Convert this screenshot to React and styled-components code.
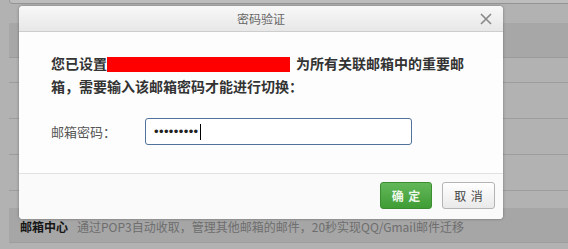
import React from "react";
import styled, { createGlobalStyle } from "styled-components";

const Global = createGlobalStyle`
  html, body { margin: 0; padding: 0; }
  body {
    background: #f1f1f1;
    font-family: "Noto Sans CJK SC", "Noto Sans", sans-serif;
    width: 568px;
    height: 249px;
    overflow: hidden;
  }
`;

const Page = styled.div`
  position: relative;
  width: 568px;
  height: 249px;
  padding-left: 9px;
  box-sizing: border-box;
  display: flex;
  flex-direction: column;
`;

const TopBox = styled.div`
  height: 3px;
  background: #ffffff;
  border-bottom: 1px solid #c8c8c8;
  border-left: 1px solid #d0d0d0;
  border-bottom-left-radius: 4px;
`;

const Spacer = styled.div`
  height: ${(p) => p.$h}px;
`;

const HeaderRow = styled.div`
  height: 34px;
  background: #e2e2e2;
  border-bottom: 1px solid #d2d2d2;
`;

const Row = styled.div`
  height: ${(p) => p.$h}px;
  border-bottom: 1px solid #d4d4d4;
`;

const Section = styled.div`
  height: 35px;
  background: #e0e0e0;
  border-bottom: 1px solid #d6d6d6;
  display: flex;
  align-items: center;
  padding: 3px 0 0 11px;
  box-sizing: border-box;
  gap: 9px;
  font-size: 12px;
  white-space: nowrap;
`;

const SectionTitle = styled.span`
  font-weight: bold;
  color: #1e1e1e;
`;

const SectionDesc = styled.span`
  color: #959595;
`;

const Overlay = styled.div`
  position: absolute;
  inset: 0;
  background: rgba(0, 0, 0, 0.26);
`;

const Dialog = styled.div`
  position: absolute;
  left: 19px;
  top: 6px;
  width: 484px;
  background: #fdfdfd;
  border-radius: 4px;
  box-shadow: 0 0 3px rgba(0, 0, 0, 0.35);
  overflow: hidden;
  display: flex;
  flex-direction: column;
`;

const TitleBar = styled.div`
  position: relative;
  height: 25px;
  border-bottom: 1px solid #cdcdcd;
  background: linear-gradient(#f8f8f8, #e7e7e7);
  display: flex;
  align-items: center;
  justify-content: center;
  font-size: 12px;
  color: #666;
`;

const Close = styled.button`
  position: absolute;
  right: 10px;
  top: 6px;
  width: 14px;
  height: 14px;
  padding: 0;
  border: 0;
  background: transparent;
  display: flex;
  align-items: center;
  justify-content: center;
`;

const Body = styled.div`
  padding: 20px 32px 28px 32px;
`;

const Message = styled.div`
  font-size: 14px;
  font-weight: bold;
  line-height: 23px;
  color: #333;
`;

const Redact = styled.span`
  display: inline-block;
  width: 183px;
  height: 15px;
  background: #ff0000;
  vertical-align: -3px;
  margin-right: 6px;
`;

const FormRow = styled.div`
  margin-top: 20px;
  display: flex;
  align-items: center;
`;

const Label = styled.label`
  width: 94px;
  font-size: 13px;
  color: #555;
`;

const Field = styled.div`
  width: 267px;
  height: 27px;
  box-sizing: border-box;
  border: 1px solid #50739b;
  border-radius: 3px;
  background: #fff;
  display: flex;
  align-items: center;
  padding-left: 8px;
  font-family: "Liberation Sans", sans-serif;
  font-size: 13px;
  letter-spacing: 0.4px;
  color: #222;
`;

const Caret = styled.span`
  display: inline-block;
  width: 1px;
  height: 16px;
  background: #000;
  margin-left: 1px;
`;

const Footer = styled.div`
  border-top: 1px solid #e2e2e2;
  background: #fafafa;
  padding: 8px 8px 10px;
  display: flex;
  justify-content: flex-end;
  gap: 10px;
`;

const Button = styled.button`
  width: ${(p) => p.$w}px;
  height: 27px;
  border-radius: 3px;
  font-family: "Noto Sans CJK SC", sans-serif;
  font-size: 12px;
  padding: 0;
  word-spacing: 2px;
  border: 1px solid ${(p) => (p.$primary ? "#3b8d2f" : "#b4b4b4")};
  background: ${(p) =>
    p.$primary
      ? "linear-gradient(#63b85a, #3f9c34)"
      : "linear-gradient(#ffffff, #e9e9e9)"};
  color: ${(p) => (p.$primary ? "#eef8ea" : "#444")};
  font-weight: ${(p) => (p.$primary ? "bold" : "normal")};
`;

export default function App() {
  return (
    <>
      <Global />
      <Page>
        <TopBox />
        <Spacer $h={19} />
        <HeaderRow />
        <Row $h={24} />
        <Row $h={35} />
        <Row $h={35} />
        <Row $h={35} />
        <Spacer $h={17} />
        <Section>
          <SectionTitle>邮箱中心</SectionTitle>
          <SectionDesc>通过POP3自动收取，管理其他邮箱的邮件，20秒实现QQ/Gmail邮件迁移</SectionDesc>
        </Section>
        <Overlay />
        <Dialog>
          <TitleBar>
            密码验证
            <Close aria-label="关闭">
              <svg width="12" height="12" viewBox="0 0 12 12">
                <path d="M1 1 L11 11 M11 1 L1 11" stroke="#8a8a8a" strokeWidth="1.7" />
              </svg>
            </Close>
          </TitleBar>
          <Body>
            <Message>
              您已设置<Redact />为所有关联邮箱中的重要邮箱，需要输入该邮箱密码才能进行切换：
            </Message>
            <FormRow>
              <Label>邮箱密码：</Label>
              <Field>
                •••••••••<Caret />
              </Field>
            </FormRow>
          </Body>
          <Footer>
            <Button $primary $w={52}>确 定</Button>
            <Button $w={53}>取 消</Button>
          </Footer>
        </Dialog>
      </Page>
    </>
  );
}
